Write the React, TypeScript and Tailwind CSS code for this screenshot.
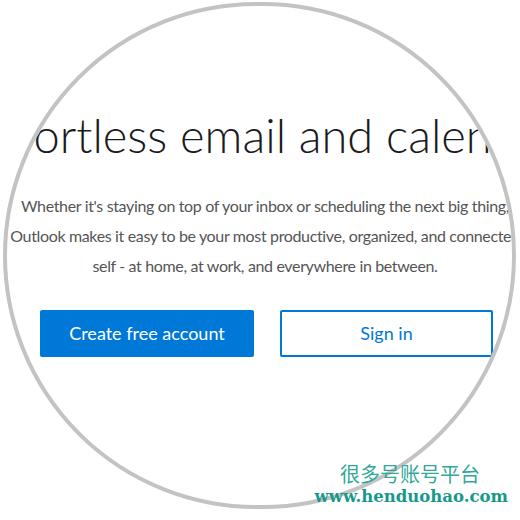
export default function App() {
  return (
    <div className="relative w-[520px] h-[520px] overflow-hidden bg-white font-['Lato',sans-serif]">
      {/* loupe */}
      <div className="ml-[3px] mt-[2px] w-[513px] h-[507px] rounded-full border-4 border-[#c3c3c3] overflow-hidden flex flex-col items-center">
        <h1 className="mt-[99px] ml-[16px] whitespace-nowrap text-[47px] leading-[60px] font-light text-[#1b1b1b]">
          Effortless email and calendar
        </h1>
        <p className="mt-[26px] ml-[11px] whitespace-nowrap text-center text-[16px] leading-[30px] tracking-[-0.35px] text-[#555]">
          Whether it's staying on top of your inbox or scheduling the next big thing,
          <br />
          Outlook makes it easy to be your most productive, organized, and connected
          <br />
          self - at home, at work, and everywhere in between.
        </p>
        <div className="mt-[29px] ml-[14px] flex gap-[26px]">
          <button className="w-[214px] h-[47px] rounded-[2px] bg-[#0078d7] text-white text-[18px]">
            Create free account
          </button>
          <button className="w-[213px] h-[47px] rounded-[2px] border-2 border-[#0078d7] bg-white text-[#0078d7] text-[18px]">
            Sign in
          </button>
        </div>
      </div>

      {/* watermark */}
      <div className="absolute right-[12px] bottom-[12px] flex flex-col items-end">
        <span className="mr-[28px] text-[20px] leading-[24px] text-[#33a898] font-['Noto_Sans_CJK_SC',sans-serif]">
          很多号账号平台
        </span>
        <span className="text-[16.5px] leading-[22px] font-bold text-[#17998a] font-['DejaVu_Serif',serif]">
          www.henduohao.com
        </span>
      </div>
    </div>
  );
}
